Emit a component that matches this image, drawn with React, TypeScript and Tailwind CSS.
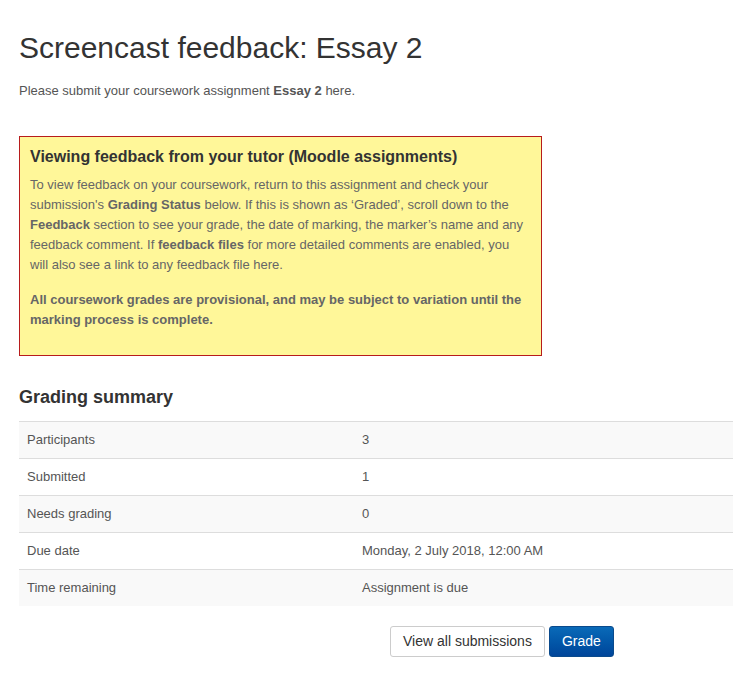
const rows: [string, string][] = [
  ["Participants", "3"],
  ["Submitted", "1"],
  ["Needs grading", "0"],
  ["Due date", "Monday, 2 July 2018, 12:00 AM"],
  ["Time remaining", "Assignment is due"],
];

export default function App() {
  return (
    <div className="min-h-[683px] bg-white pl-[19px] font-['Liberation_Sans',Arial,sans-serif] text-[#333]">
      <h1 className="pt-[29px] text-[30px] leading-[38px] text-[#333]">Screencast feedback: Essay 2</h1>
      <p className="mt-[14px] text-[13px] leading-[20px] text-[#555]">
        Please submit your coursework assignment <b className="font-bold">Essay 2</b> here.
      </p>

      {/* Tutor notice */}
      <div className="mt-[35px] h-[220px] w-[523px] border border-[#b71c1c] bg-[#fff799] pl-[10px] pr-[16px] pt-[9px]">
        <h3 className="text-[16px] font-bold leading-[22px] text-[#333]">
          Viewing feedback from your tutor (Moodle assignments)
        </h3>
        <p className="mt-[7px] text-[13px] leading-[20px] text-[#666]">
          To view feedback on your coursework, return to this assignment and check your submission's{" "}
          <b>Grading Status</b> below. If this is shown as ‘Graded’, scroll down to the <b>Feedback</b>{" "}
          section to see your grade, the date of marking, the marker’s name and any feedback comment. If{" "}
          <b>feedback files</b> for more detailed comments are enabled, you will also see a link to any
          feedback file here.
        </p>
        <p className="mt-[15px] text-[13px] font-bold leading-[20px] text-[#666]">
          All coursework grades are provisional, and may be subject to variation until the marking process is
          complete.
        </p>
      </div>

      <h3 className="mt-[29px] text-[18px] font-bold leading-[24px] text-[#333]">Grading summary</h3>
      <div className="mt-[12px] text-[13px] text-[#555]">
        {rows.map(([k, v], i) => (
          <div
            key={k}
            className={`flex h-[37px] items-center border-t border-[#ddd] ${i % 2 === 0 ? "bg-[#f9f9f9]" : "bg-white"}`}
          >
            <div className="w-[343px] pl-[8px]">{k}</div>
            <div>{v}</div>
          </div>
        ))}
      </div>

      <div className="mt-[20px] flex gap-[4px] pl-[371px]">
        <button className="h-[31px] rounded-[3px] border border-[#ccc] bg-white px-[12px] text-[14px] text-[#333]">
          View all submissions
        </button>
        <button className="h-[31px] rounded-[3px] border border-[#0a4a8c] bg-gradient-to-b from-[#0a6ab8] to-[#00459a] px-[12px] text-[14px] text-white">
          Grade
        </button>
      </div>
    </div>
  );
}
